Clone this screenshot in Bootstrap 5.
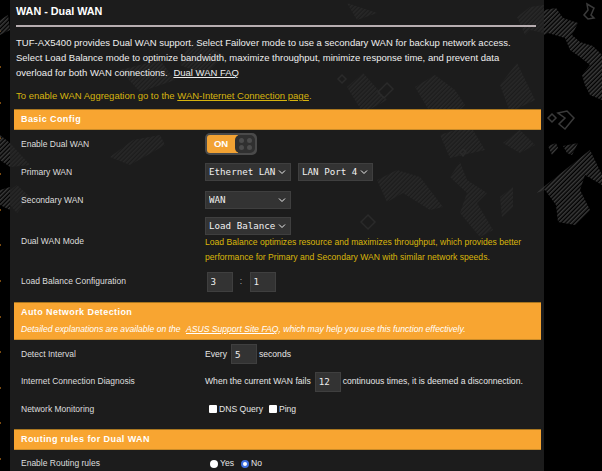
<!DOCTYPE html>
<html lang="en"><head><meta charset="utf-8"><title>WAN - Dual WAN</title>
<link href="https://cdn.jsdelivr.net/npm/bootstrap@5.3.0/dist/css/bootstrap.min.css" rel="stylesheet">
<style>
html,body{height:471px;overflow:hidden;background:#000}
body{font-family:"Liberation Sans",Arial,sans-serif;font-size:8.6px;color:#e6e6e6;line-height:1.2;position:relative}
.decor{position:absolute;left:0;top:0;width:602px;height:471px;z-index:0}
.shell{position:relative;z-index:1;margin-left:10px;width:534px;height:471px;overflow:hidden}
.ptitle{font-size:10.8px;font-weight:700;color:#fff;padding:4px 0 0 6px;height:25px;line-height:14px}
.prule{height:2px;background:#b7adb0;margin:0 8px 0 6px}
.intro{font-size:9.5px;line-height:15px;padding:8px 0 0 6px;height:60px;color:#eee}
.intro a{color:#eee;margin-left:3px}
.tip{font-size:9.5px;line-height:15px;color:#d6b40f;padding:1px 0 0 6px;height:22px}
.tip a{color:#d6b40f}
.sect{background:#f8a531;margin-left:4px;width:527px;color:#fff;font-weight:700;font-size:9px;padding:0 0 0 7px;border-top:1px solid #a8751f;border-bottom:1px solid #c98a28;letter-spacing:.42px}
.sect-a{height:21px;line-height:18px}
.sect-b{height:38px;padding-top:2px;line-height:14px}
.sect-b p{margin:4px 0 0;font-weight:400;font-style:italic;letter-spacing:0;color:#fff;font-size:8.6px;line-height:12px}
.sect-b a{color:#fff;margin-left:3px}
.fline{display:flex;align-items:center;padding-left:11px}
.flabel{width:184px;flex:none;color:#dedede;font-size:8.5px}
.h28{height:28px}.h27{height:27px}
.gap7{margin-bottom:7px}.gap6{margin-bottom:6px}
.fmode{height:54px}
.fsel{height:18px;width:86px;padding:0 0 0 3px;background-color:#333;color:#f0f0f0;border:1px solid #3f3f3f;border-radius:0;font-family:"DejaVu Sans Mono",monospace;font-size:9.2px;line-height:16px;background-position:right 4px center;background-size:8px 8px;background-image:url("data:image/svg+xml,%3csvg xmlns='http://www.w3.org/2000/svg' viewBox='0 0 8 8'%3e%3cpath fill='none' stroke='%23eee' stroke-width='1' d='M1 2.5l3 3 3-3'/%3e%3c/svg%3e")}
.fsel-b{width:75px;margin-left:7px}
.fnote{color:#d9b60a;font-size:8.6px;line-height:15.5px}
.fnum{width:26px;height:20px;min-height:0;background:#333;border:1px solid #3f3f3f;color:#eee;font-family:"DejaVu Sans Mono",monospace;font-size:9.2px;padding:0 0 0 3px;border-radius:0;flex:none}
.fnum-a{margin-left:1.5px}
.fcolon{width:17px;text-align:center;color:#aaa}
.fsw{width:52px;height:22px;background:#4a4a4a;border-radius:5px;padding:2px;display:flex}
.fsw-on{width:31px;background:#f2a233;border-radius:3px 0 0 3px;color:#fff;font-weight:700;font-size:9.5px;text-align:center;line-height:18px;flex:none;padding-right:3px}
.fsw-knob{flex:1;margin-left:-3px;background:#303030;border-radius:5px;display:grid;grid-template-columns:5px 5px;justify-content:center;align-content:center;gap:2px 3px}
.fsw-knob i{background:#4c4c4c;border-radius:50%;width:5px;height:5px}
.fopt{width:8px;height:8px;margin:0 2px 0 4px;background-color:#fff;border:0;float:none;flex:none}
.fopt-s{margin-left:6px}
.fopt[type=checkbox]{border-radius:1px}
.fopt[type=radio]{margin-left:5px}
.fopt[type=radio]:checked{background:#fff;border:2px solid #3f6fe0;background-image:none}
.fopt-r{margin-left:7px !important}
.fgap{margin:0 2px 0 4px}
</style></head>
<body>
<svg class="decor" viewBox="0 0 602 471" aria-hidden="true">
<defs>
<pattern id="hp" width="3" height="3" patternUnits="userSpaceOnUse" patternTransform="rotate(-45)"><rect width="3" height="1.6" fill="#282828"/></pattern>
<pattern id="hq" width="3" height="3" patternUnits="userSpaceOnUse" patternTransform="rotate(-45)"><rect width="3" height="1.6" fill="#3a3a3a"/></pattern>
</defs>
<g fill="#7a4a10"><rect x="0" y="30" width="1" height="2"/><rect x="0" y="66" width="1" height="2"/><rect x="0" y="102" width="1" height="2"/><rect x="0" y="137" width="1" height="2"/><rect x="0" y="173" width="1" height="2"/><rect x="0" y="209" width="1" height="2"/><rect x="0" y="244" width="1" height="2"/><rect x="0" y="280" width="1" height="2"/><rect x="0" y="316" width="1" height="2"/><rect x="0" y="351" width="1" height="2"/><rect x="0" y="387" width="1" height="2"/><rect x="0" y="422" width="1" height="2"/><rect x="0" y="458" width="1" height="2"/></g>
<rect x="10" y="0" width="534" height="471" fill="#1c1c1c"/>
<g fill="url(#hq)">
<polygon points="544,10 556,8 563,18 578,23 572,35 580,42 593,46 602,55 602,100 590,95 585,85 582,75 590,65 580,57 570,50 565,38 548,33 544,35"/>
<polygon points="536,193 590,150 602,175 602,185 585,175 580,190 590,210 575,225 558,222 556,205 545,190"/>
<polygon points="548,146 556,143 558,148 552,155"/>
<polygon points="563,146 578,143 572,155 567,153"/>
<polygon points="0,20 8,15 10,30 0,35"/>
<polygon points="0,135 10,143 10,167 0,160"/>
<polygon points="0,190 10,187 10,210 0,205"/>
</g>
<g fill="url(#hp)">
<polygon points="517,17 530,7 544,5 544,33 530,30 525,35"/>
<polygon points="500,85 517,63 535,100 510,112"/>
<polygon points="415,87 435,75 455,90 465,105 450,120 430,112"/>
<polygon points="347,87 363,73 387,100 363,113"/>
<polygon points="347,3 377,13 357,20"/>
<polygon points="503,143 520,130 535,145 520,153"/>
<polygon points="377,180 397,170 420,177 443,207 430,210 403,193 387,202"/>
<polygon points="450,177 460,162 467,180 487,193 477,203 493,230 480,237 460,213 467,193"/>
<polygon points="500,197 513,187 513,207 502,217"/>
<polygon points="10,143 30,165 10,167"/>
<polygon points="10,190 17,185 30,197 17,213 10,205"/>
<polygon points="110,157 133,140 160,135 165,145 130,165"/>
<polygon points="190,40 225,55 205,75 180,65"/>
<polygon points="120,70 160,60 175,80 140,92"/>
<polygon points="440,135 470,125 485,150 450,158"/>
</g>
<g fill="none" stroke="#2a2a2a" stroke-width="1.5">
<path d="M368 215l7 7-7 7-7-7z"/><path d="M342 75l4 4-4 4-4-4z"/><path d="M387 83l6 6-9 9-6-6z"/><path d="M463 149l3 3-3 4-3-4z"/>
</g>
<g fill="none" stroke="#3a3a3a" stroke-width="1.5">
<path d="M552 114l4 4-4 4-4-4z"/><path d="M558 113l9-2 7 7-9 11-6-5 6-6-7-5z"/><path d="M587 4l7 4-3 7 3 3-6 1-4-4 4-5z"/>
</g>
</svg>
<div class="shell">
<div class="ptitle">WAN - Dual WAN</div>
<div class="prule"></div>
<div class="intro">TUF-AX5400 provides Dual WAN support. Select Failover mode to use a secondary WAN for backup network access.<br>Select Load Balance mode to optimize bandwidth, maximize throughput, minimize response time, and prevent data<br>overload for both WAN connections. <a href="#">Dual WAN FAQ</a></div>
<div class="tip">To enable WAN Aggregation go to the <a href="#">WAN-Internet Connection page</a>.</div>
<div class="sect sect-a">Basic Config</div>
<div class="fline h28"><div class="flabel">Enable Dual WAN</div><div class="fsw"><div class="fsw-on">ON</div><div class="fsw-knob"><i></i><i></i><i></i><i></i></div></div></div>
<div class="fline h28"><div class="flabel">Primary WAN</div><select class="form-select fsel"><option>Ethernet LAN</option></select><select class="form-select fsel fsel-b"><option>LAN Port 4</option></select></div>
<div class="fline h28"><div class="flabel">Secondary WAN</div><select class="form-select fsel"><option>WAN</option></select></div>
<div class="fline fmode"><div class="flabel">Dual WAN Mode</div><div><select class="form-select fsel"><option>Load Balance</option></select><div class="fnote">Load Balance optimizes resource and maximizes throughput, which provides better<br>performance for Primary and Secondary WAN with similar network speeds.</div></div></div>
<div class="fline h27 gap7"><div class="flabel">Load Balance Configuration</div><input class="form-control fnum fnum-a" value="3"><span class="fcolon">:</span><input class="form-control fnum" value="1"></div>
<div class="sect sect-b">Auto Network Detection<p>Detailed explanations are available on the <a href="#">ASUS Support Site FAQ</a>, which may help you use this function effectively.</p></div>
<div class="fline h28"><div class="flabel">Detect Interval</div><span>Every</span><input class="form-control fnum fgap" value="5"><span>seconds</span></div>
<div class="fline h27"><div class="flabel">Internet Connection Diagnosis</div><span>When the current WAN fails</span><input class="form-control fnum fgap" value="12"><span>continuous times, it is deemed a disconnection.</span></div>
<div class="fline h28 gap6"><div class="flabel">Network Monitoring</div><input class="form-check-input fopt" type="checkbox"><span>DNS Query</span><input class="form-check-input fopt fopt-s" type="checkbox"><span>Ping</span></div>
<div class="sect sect-a">Routing rules for Dual WAN</div>
<div class="fline h27"><div class="flabel">Enable Routing rules</div><input class="form-check-input fopt" type="radio" name="rr"><span>Yes</span><input class="form-check-input fopt fopt-r" type="radio" name="rr" checked><span>No</span></div>
</div>
</body></html>
